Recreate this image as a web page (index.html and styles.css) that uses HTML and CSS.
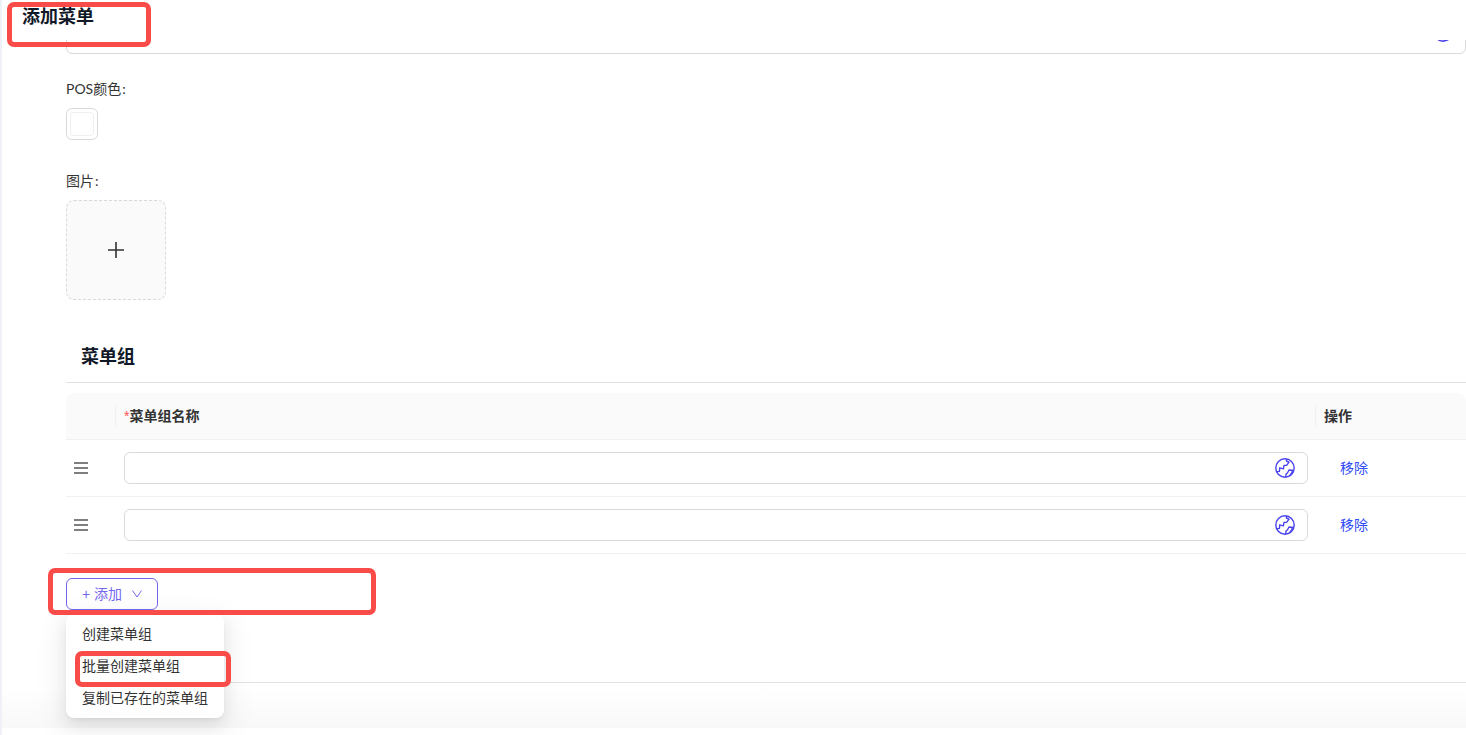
FILE: index.html
```
<!DOCTYPE html>
<html lang="zh-CN">
<head>
    <meta charset="UTF-8">
    <meta name="viewport" content="width=device-width, initial-scale=1.0">
    <title>添加菜单</title>
    <link rel="stylesheet" href="styles.css">
</head>
<body>
    <svg width="0" height="0" class="sprite" aria-hidden="true">
        <symbol id="globe" viewBox="0 0 20 20">
            <circle cx="10" cy="10" r="9.2"/>
            <path d="M1.4 13.6 4.4 13.4 4.8 9.8 8.4 10.8 9 7.4 11.8 7.2 14 4.2 11.4 3 11.8 1"/>
            <path d="M18.8 12.4 14 12 12.4 15 11 16 10.8 19M17.4 12.4 17 14.4 14.6 18"/>
        </symbol>
        <symbol id="drag" viewBox="0 0 14 14">
            <path d="M0 2h14M0 7h14M0 12h14"/>
        </symbol>
    </svg>

    <header class="page-header">
        <h1>添加菜单</h1>
        <div class="mark mark-title"></div>
    </header>

    <main class="form">
        <div class="input-box input-tall">
            <input type="text" aria-label="描述">
            <button type="button" class="lang-btn" aria-label="多语言"><svg><use href="#globe"/></svg></button>
        </div>

        <div class="field">
            <label for="color">POS颜色</label>
            <button type="button" id="color" class="color-picker"><span></span></button>
        </div>

        <div class="field">
            <label for="upload">图片</label>
            <button type="button" id="upload" class="upload">
                <svg width="16" height="16" viewBox="0 0 16 16"><path d="M8 0v16M0 8h16"/></svg>
            </button>
        </div>

        <section class="group">
            <h2>菜单组</h2>
            <table>
                <thead>
                    <tr>
                        <th class="col-drag"></th>
                        <th><span class="required">*</span>菜单组名称</th>
                        <th class="col-action">操作</th>
                    </tr>
                </thead>
                <tbody>
                    <tr>
                        <td><svg class="drag"><use href="#drag"/></svg></td>
                        <td>
                            <div class="input-box">
                                <input type="text" aria-label="菜单组名称">
                                <button type="button" class="lang-btn" aria-label="多语言"><svg><use href="#globe"/></svg></button>
                            </div>
                        </td>
                        <td><a href="#" class="remove">移除</a></td>
                    </tr>
                    <tr>
                        <td><svg class="drag"><use href="#drag"/></svg></td>
                        <td>
                            <div class="input-box">
                                <input type="text" aria-label="菜单组名称">
                                <button type="button" class="lang-btn" aria-label="多语言"><svg><use href="#globe"/></svg></button>
                            </div>
                        </td>
                        <td><a href="#" class="remove">移除</a></td>
                    </tr>
                </tbody>
            </table>

            <div class="add">
                <button type="button" class="add-btn">
                    <span>+ 添加</span>
                    <svg width="10" height="8" viewBox="0 0 10 8"><path d="M0.5 0.5 5 7 9.5 0.5"/></svg>
                </button>
                <div class="menu">
                    <button type="button">创建菜单组</button>
                    <button type="button">批量创建菜单组</button>
                    <button type="button">复制已存在的菜单组</button>
                    <div class="mark mark-batch"></div>
                </div>
                <div class="mark mark-add"></div>
            </div>
        </section>
    </main>

    <footer class="page-footer"></footer>
</body>
</html>
```

FILE: styles.css
```
* {
    margin: 0;
    padding: 0;
    box-sizing: border-box;
}

body {
    min-height: 100vh;
    display: flex;
    flex-direction: column;
    border-left: 2px solid #f0f0f7;
    background: #fff;
    color: #333;
    font-family: Lato, "Noto Sans CJK SC", sans-serif;
    font-size: 14px;
    line-height: 22px;
}

button, input {
    font: inherit;
    color: inherit;
    background: none;
    border: none;
    outline: none;
}

button {
    cursor: pointer;
}

svg {
    display: block;
    fill: none;
    stroke: currentColor;
}

.sprite {
    position: absolute;
}

h1, h2 {
    font-size: 18px;
    line-height: 32px;
    font-weight: 700;
    color: #111827;
}

.page-header {
    position: relative;
    z-index: 2;
    height: 40px;
    padding-left: 20px;
    background: #fff;
}

.form {
    flex: 1;
    padding-left: 64px;
    background: linear-gradient(to top, #f8f8f8, #fff 40px);
}

/* inputs */
.input-box {
    display: flex;
    align-items: center;
    height: 32px;
    padding: 0 12px;
    border: 1px solid #d9d9d9;
    border-radius: 6px;
}

.input-box input {
    flex: 1;
    min-width: 0;
}

/* scrolled half under the header */
.input-tall {
    height: 44px;
    margin-top: -30px;
}

.lang-btn {
    color: #4a42ec;
}

.lang-btn svg {
    width: 20px;
    height: 20px;
    stroke-width: 1.4;
    stroke-linejoin: round;
}

.field {
    margin-top: 24px;
}

.field + .field {
    margin-top: 30px;
}

.field label {
    display: block;
    margin-bottom: 8px;
}

.field label::after {
    content: ":";
    margin-left: 1px;
}

.color-picker {
    display: block;
    width: 32px;
    height: 32px;
    padding: 3px;
    border: 1px solid #d9d9d9;
    border-radius: 6px;
}

.color-picker span {
    display: block;
    height: 24px;
    border: 1px solid #efefef;
    border-radius: 4px;
}

.upload {
    display: flex;
    align-items: center;
    justify-content: center;
    width: 100px;
    height: 100px;
    border: 1px dashed #d9d9d9;
    border-radius: 8px;
    background: #fafafa;
}

.upload svg {
    stroke-width: 1.6;
}

/* menu groups */
.group {
    margin-top: 30px;
    padding-bottom: 72px;
    border-bottom: 1px solid #e3e3e3;
}

.group h2 {
    padding: 10px 15px;
    border-bottom: 1px solid #e3e3e3;
    margin-bottom: 10px;
}

table {
    width: 100%;
    table-layout: fixed;
    border-collapse: separate;
    border-spacing: 0;
}

th, td {
    padding: 12px 8px;
    border-bottom: 1px solid #f0f0f0;
    text-align: left;
}

th {
    position: relative;
    height: 47px;
    background: #fafafa;
    font-weight: 600;
}

th:first-child {
    border-top-left-radius: 8px;
}

th:last-child {
    border-top-right-radius: 8px;
}

th:not(:last-child)::after {
    content: "";
    position: absolute;
    top: 12px;
    right: 0;
    width: 1px;
    height: 22px;
    background: #f0f0f0;
}

.col-drag {
    width: 50px;
}

.col-action {
    width: 150px;
}

.required {
    color: #ff4d4f;
    font-family: "Liberation Sans", sans-serif;
    font-weight: 400;
}

.drag {
    width: 14px;
    height: 14px;
    color: #555;
    stroke-width: 1.3;
}

.remove {
    padding: 0 16px;
    color: #2f4bf5;
    text-decoration: none;
}

/* add dropdown */
.add {
    position: relative;
    margin-top: 24px;
}

.add-btn {
    display: flex;
    align-items: center;
    gap: 10px;
    height: 32px;
    padding: 0 15px;
    border: 1px solid #7367f0;
    border-radius: 6px;
    color: #7367f0;
    font-family: "Liberation Sans", "Noto Sans CJK SC", sans-serif;
}

.menu {
    position: absolute;
    z-index: 3;
    top: 36px;
    left: 0;
    padding: 4px;
    border-radius: 8px;
    background: #fff;
    box-shadow: 0 6px 16px rgba(0, 0, 0, 0.08), 0 3px 6px -4px rgba(0, 0, 0, 0.12), 0 9px 28px 8px rgba(0, 0, 0, 0.05);
}

.menu button {
    display: block;
    width: 100%;
    padding: 5px 12px;
    text-align: left;
    white-space: nowrap;
}

/* red highlights */
.mark {
    position: absolute;
    z-index: 4;
    border: 5px solid #f94b48;
    border-radius: 7px;
    pointer-events: none;
}

.mark-title {
    top: 2px;
    left: 5px;
    width: 144px;
    height: 45px;
}

.mark-add {
    top: -10px;
    left: -18px;
    width: 328px;
    height: 47px;
}

.mark-batch {
    top: 37px;
    left: 9px;
    width: 156px;
    height: 36px;
}

.page-footer {
    height: 7px;
    background: #fff;
}
```
